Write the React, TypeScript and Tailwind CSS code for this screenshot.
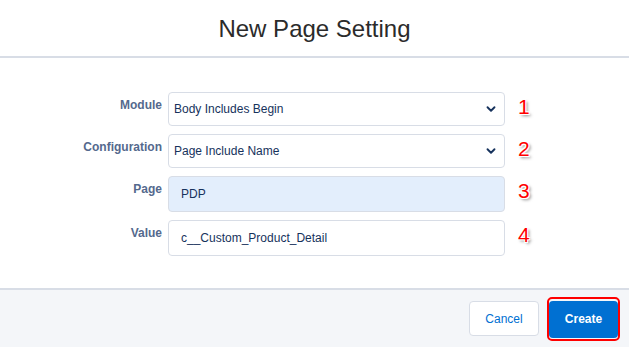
import { ChevronDown } from 'lucide-react';

const rows = [
  { label: 'Module', value: 'Body Includes Begin', kind: 'select', n: '1' },
  { label: 'Configuration', value: 'Page Include Name', kind: 'select', n: '2' },
  { label: 'Page', value: 'PDP', kind: 'filled', n: '3' },
  { label: 'Value', value: 'c__Custom_Product_Detail', kind: 'input', n: '4' },
];

function Field({ value, kind }: { value: string; kind: string }) {
  if (kind === 'select') {
    return (
      <div className="flex h-[34px] w-[337px] items-center justify-between rounded-[4px] border border-[#d8dde6] bg-white pl-[5px] pr-[6px] text-[12px] text-[#16325c]">
        <span>{value}</span>
        <ChevronDown size={14} strokeWidth={3.2} className="text-[#16325c]" />
      </div>
    );
  }
  return (
    <div
      className={
        kind === 'filled'
          ? 'flex h-[36px] w-[337px] items-center rounded-[4px] border border-[#d8dde6] bg-[#e3eefc] pl-[12px] text-[12px] text-[#16325c]'
          : 'flex h-[36px] w-[337px] items-center rounded-[4px] border border-[#d8dde6] bg-white pl-[12px] text-[12px] text-[#16325c]'
      }
    >
      {value}
    </div>
  );
}

export default function App() {
  return (
    <div className="flex h-[347px] w-[629px] flex-col bg-white font-['Liberation_Sans',Arial,sans-serif]">
      <div className="flex h-[58px] items-center justify-center border-b-2 border-[#d8dde6] pt-[1px] text-[24px] text-[#2b2b2b]">
        New Page Setting
      </div>

      <div className="flex flex-1 flex-col gap-[8px] pt-[34px]">
        {rows.map((r) => (
          <div key={r.label} className="flex items-start">
            <div className="w-[162px] pt-[5px] text-right text-[12px] font-bold leading-[16px] text-[#54698d]">
              {r.label}
            </div>
            <div className="ml-[6px]">
              <Field value={r.value} kind={r.kind} />
            </div>
            <div className="ml-[13px] pt-[3px] text-[21px] leading-[24px] text-[#ff0000] [text-shadow:0_0_1px_#fff,1px_1px_0_#fff,-1px_-1px_0_#fff,1px_-1px_0_#fff,-1px_1px_0_#fff,2px_2px_3px_rgba(0,0,0,0.5)]">
              {r.n}
            </div>
          </div>
        ))}
      </div>

      <div className="flex h-[59px] items-center justify-end gap-[8px] border-t-2 border-[#d8dde6] bg-[#f4f6f9] pr-[9px]">
        <button className="h-[35px] w-[70px] rounded-[4px] border border-[#d8dde6] bg-white text-[12px] text-[#0070d2]">
          Cancel
        </button>
        <div className="rounded-[5px] border-2 border-[#ff0000] px-0 pb-[1px] pt-[2px]">
          <button className="h-[37px] w-[69px] rounded-[4px] bg-[#0070d2] text-[12px] font-bold text-white">
            Create
          </button>
        </div>
      </div>
    </div>
  );
}
